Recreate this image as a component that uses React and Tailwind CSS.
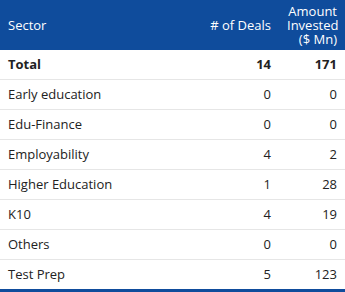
const rows = [
  { sector: "Early education", deals: 0, amount: 0 },
  { sector: "Edu-Finance", deals: 0, amount: 0 },
  { sector: "Employability", deals: 4, amount: 2 },
  { sector: "Higher Education", deals: 1, amount: 28 },
  { sector: "K10", deals: 4, amount: 19 },
  { sector: "Others", deals: 0, amount: 0 },
  { sector: "Test Prep", deals: 5, amount: 123 },
];

export default function App() {
  return (
    <div className="w-[345px] bg-white font-['Open_Sans',sans-serif] text-[13px] text-[#222]">
      <div className="grid grid-cols-[1fr_auto_66px] h-[50px] items-center bg-[#0f4c9c] text-white leading-[14px]">
        <div className="px-2">Sector</div>
        <div className="px-2 text-right">
          # of Deals
        </div>
        <div className="px-2 text-right">
          Amount Invested ($ Mn)
        </div>
      </div>

      <div className="grid grid-cols-[1fr_auto_66px] h-[30px] items-center border-b border-[#e6e6e6] font-bold">
        <div className="px-2">Total</div>
        <div className="px-2 text-right w-[76px]">14</div>
        <div className="px-2 text-right">171</div>
      </div>

      {rows.map((r, i) => (
        <div
          key={r.sector}
          className={`grid grid-cols-[1fr_auto_66px] items-center ${
            i === rows.length - 1
              ? "h-[32px] border-b-[3px] border-[#0f4c9c]"
              : "h-[30px] border-b border-[#e6e6e6]"
          }`}
        >
          <div className="px-2">{r.sector}</div>
          <div className="px-2 text-right w-[76px]">{r.deals}</div>
          <div className="px-2 text-right">{r.amount}</div>
        </div>
      ))}
    </div>
  );
}
